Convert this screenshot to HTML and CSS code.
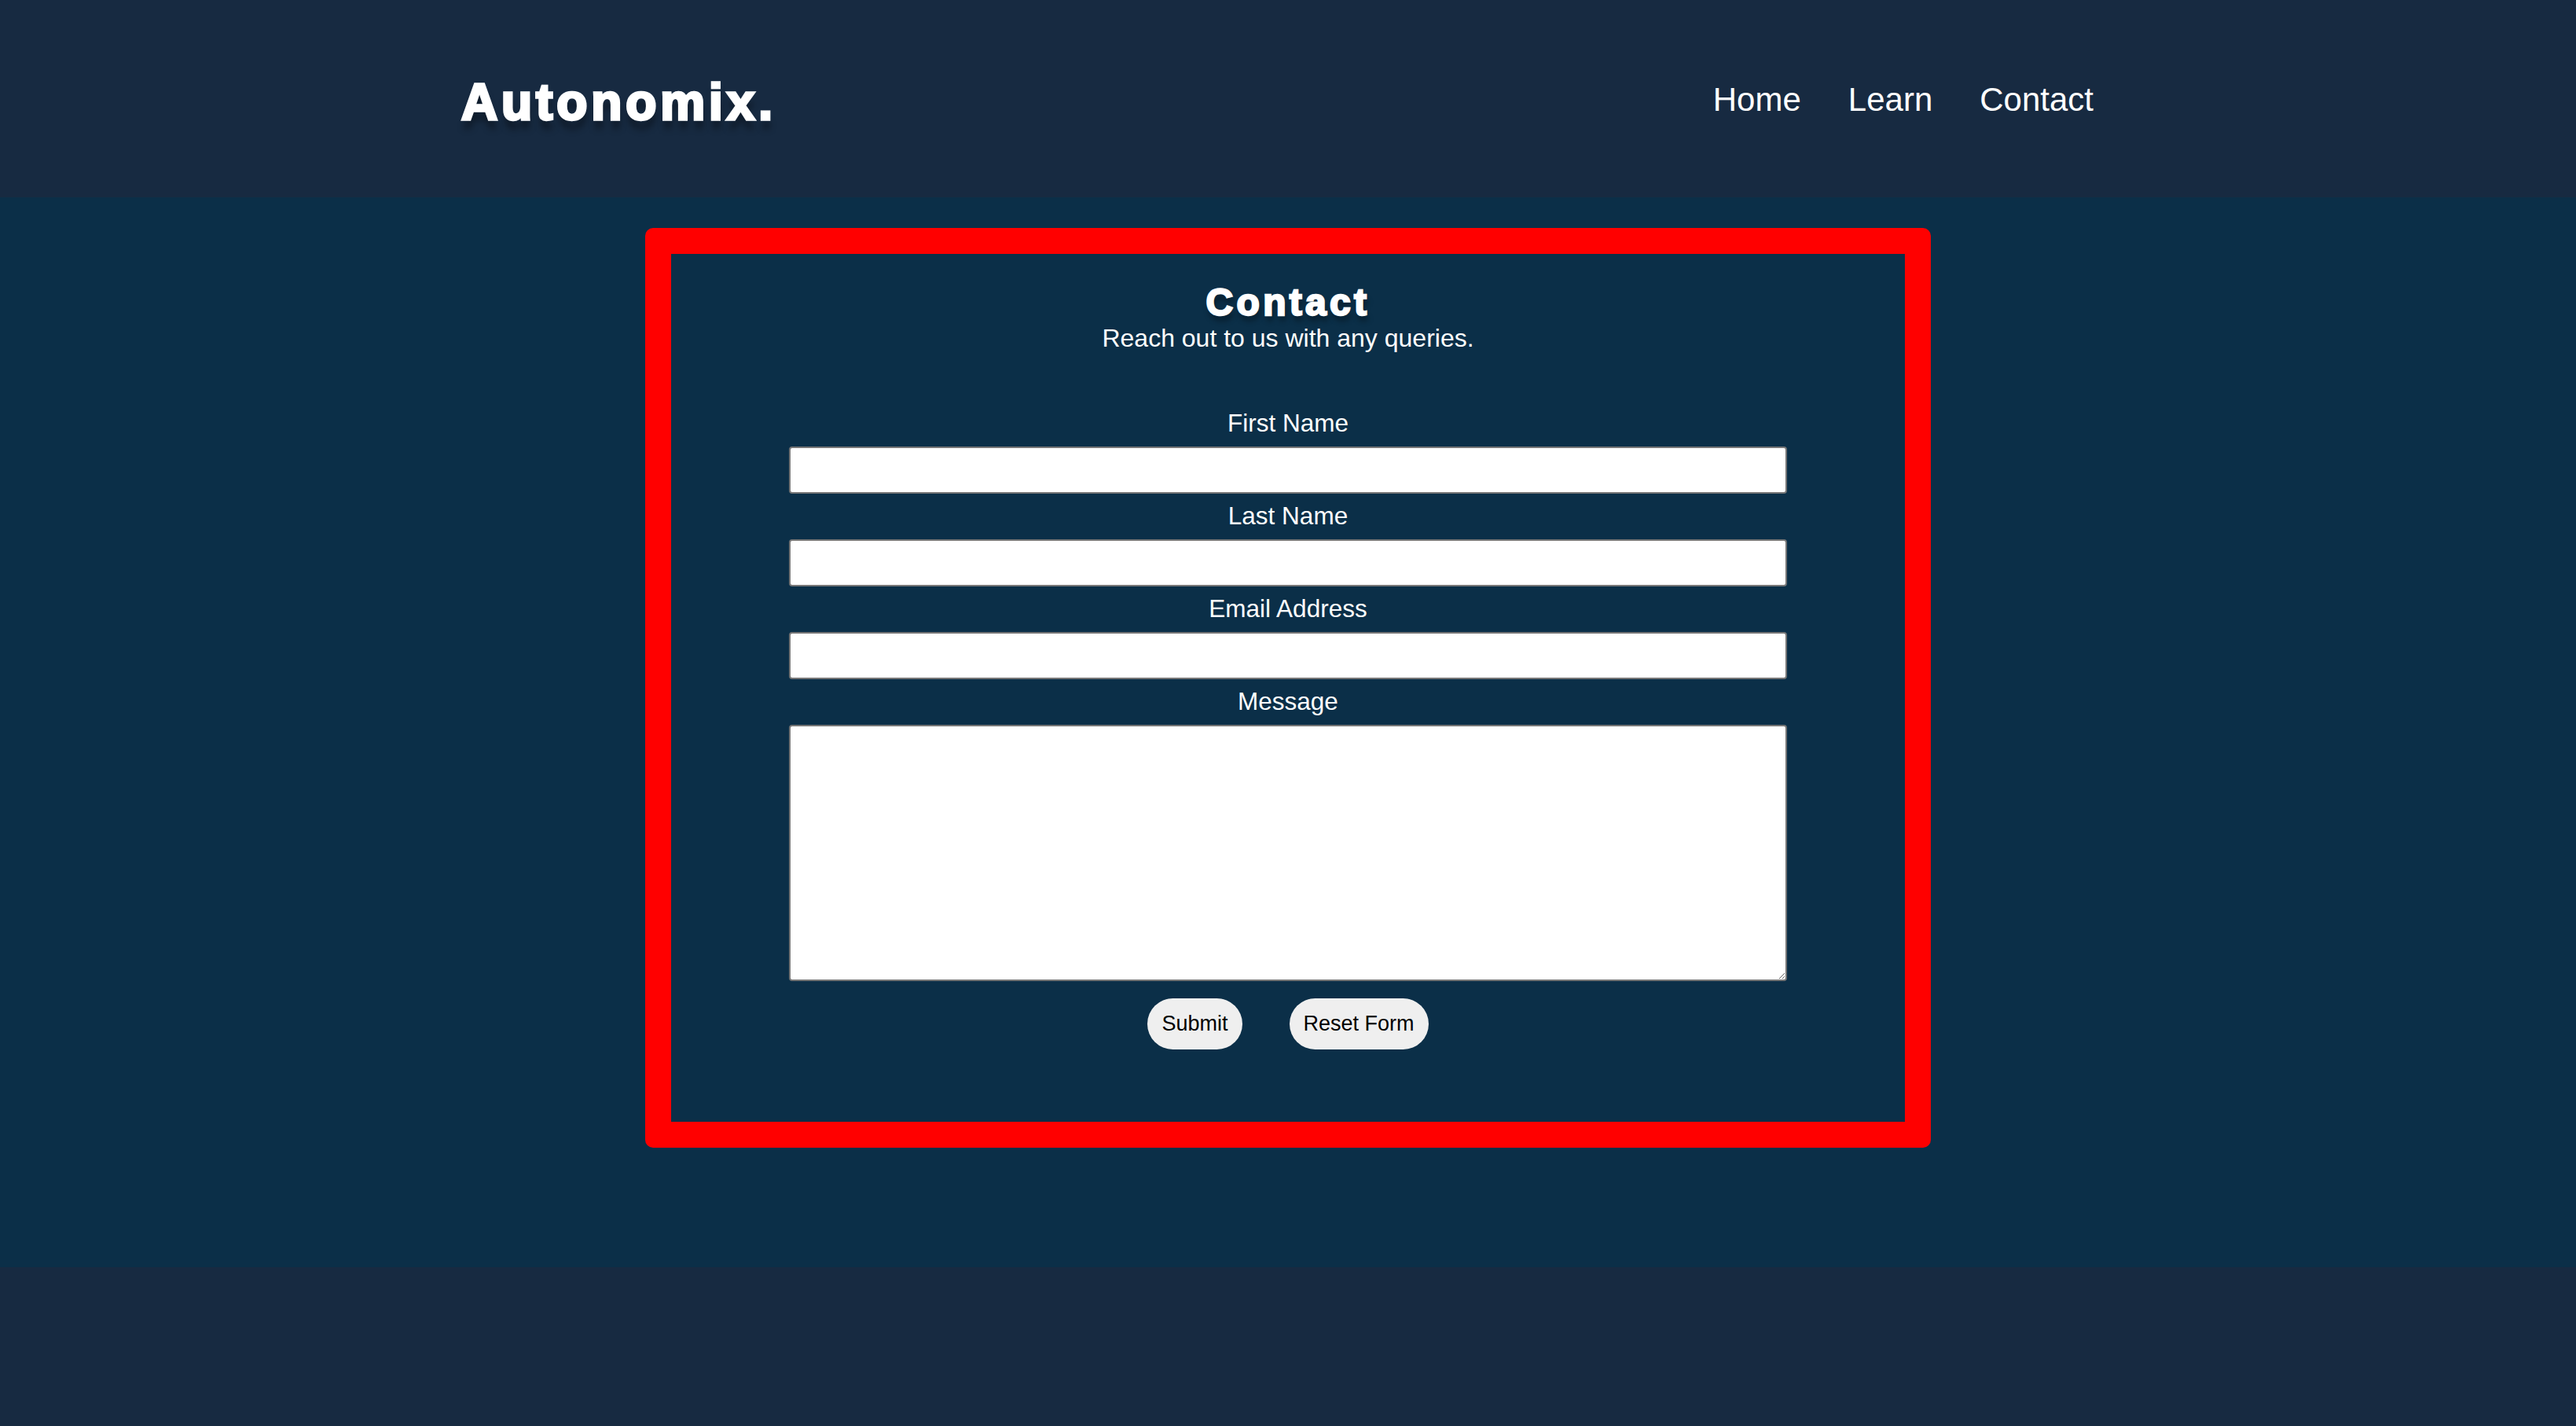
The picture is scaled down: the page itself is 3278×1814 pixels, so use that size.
FILE: index.html
```html
<!DOCTYPE html>
<html lang="en">
<head>
<meta charset="utf-8">
<title>Autonomix. - Contact</title>
<link rel="stylesheet" href="styles.css">
</head>
<body>
<header class="site-header">
  <div class="logo">Autonomix.</div>
  <nav class="nav">
    <a href="#" class="nav-link">Home</a>
    <a href="#" class="nav-link">Learn</a>
    <a href="#" class="nav-link">Contact</a>
  </nav>
</header>
<main class="main">
  <section class="contact-box">
    <h1 class="contact-title">Contact</h1>
    <p class="contact-sub">Reach out to us with any queries.</p>
    <form class="contact-form">
      <label class="field-label" for="fname">First Name</label>
      <input class="field-input" type="text" id="fname">
      <label class="field-label" for="lname">Last Name</label>
      <input class="field-input" type="text" id="lname">
      <label class="field-label" for="email">Email Address</label>
      <input class="field-input" type="email" id="email">
      <label class="field-label" for="msg">Message</label>
      <textarea class="field-area" id="msg"></textarea>
      <div class="form-buttons">
        <button type="submit" class="btn">Submit</button>
        <button type="reset" class="btn">Reset Form</button>
      </div>
    </form>
  </section>
</main>
</body>
</html>
```
FILE: styles.css
```css
* {
  box-sizing: border-box;
}

html, body {
  margin: 0;
  padding: 0;
}

body {
  background: #172a41;
  font-family: "Liberation Sans", Arial, sans-serif;
  color: #ffffff;
  min-height: 1814px;
}

.site-header {
  height: 251px;
  padding: 8px 614px 0 587px;
  display: flex;
  align-items: center;
  justify-content: space-between;
  background: #172a41;
}

.logo {
  font-size: 64px;
  line-height: 64px;
  font-weight: 700;
  letter-spacing: 4.9px;
  color: #ffffff;
  -webkit-text-stroke: 3.4px #ffffff;
  text-shadow: 1px 12px 9px rgba(0, 0, 0, 0.38);
}

.nav {
  display: flex;
  gap: 60px;
  padding-bottom: 5px;
}

.nav-link {
  font-size: 42px;
  line-height: 42px;
  color: #ffffff;
  text-decoration: none;
}

.main {
  background: #0b2f48;
  padding: 39px 0 152px;
}

.contact-box {
  width: 1636px;
  margin: 0 auto;
  border: 33px solid #ff0000;
  border-radius: 10px;
  padding: 35px 0 92px;
  text-align: center;
}

.contact-title {
  margin: 0;
  font-size: 48px;
  line-height: 54px;
  font-weight: 700;
  letter-spacing: 4.3px;
  -webkit-text-stroke: 2.4px #ffffff;
  text-shadow: 2px 7px 7px rgba(0, 0, 0, 0.4);
}

.contact-sub {
  margin: 0;
  font-size: 32px;
  line-height: 36px;
}

.contact-form {
  margin-top: 72px;
  display: flex;
  flex-direction: column;
  align-items: center;
}

.field-label {
  display: block;
  font-size: 31.5px;
  line-height: 36px;
  margin-bottom: 12px;
}

.field-input,
.field-area {
  display: block;
  width: 1270px;
  background: #ffffff;
  border: 2px solid #767676;
  border-radius: 4px;
  margin: 0 0 10px;
  font-family: "Liberation Sans", Arial, sans-serif;
  font-size: 28px;
}

.field-input {
  height: 60px;
}

.field-area {
  height: 326px;
  margin-bottom: 22px;
}

.form-buttons {
  display: flex;
  justify-content: center;
  gap: 60px;
}

.btn {
  height: 65px;
  padding: 0 18px;
  border: none;
  border-radius: 33px;
  background: #efefef;
  color: #000000;
  font-family: "Liberation Sans", Arial, sans-serif;
  font-size: 27px;
}
```
